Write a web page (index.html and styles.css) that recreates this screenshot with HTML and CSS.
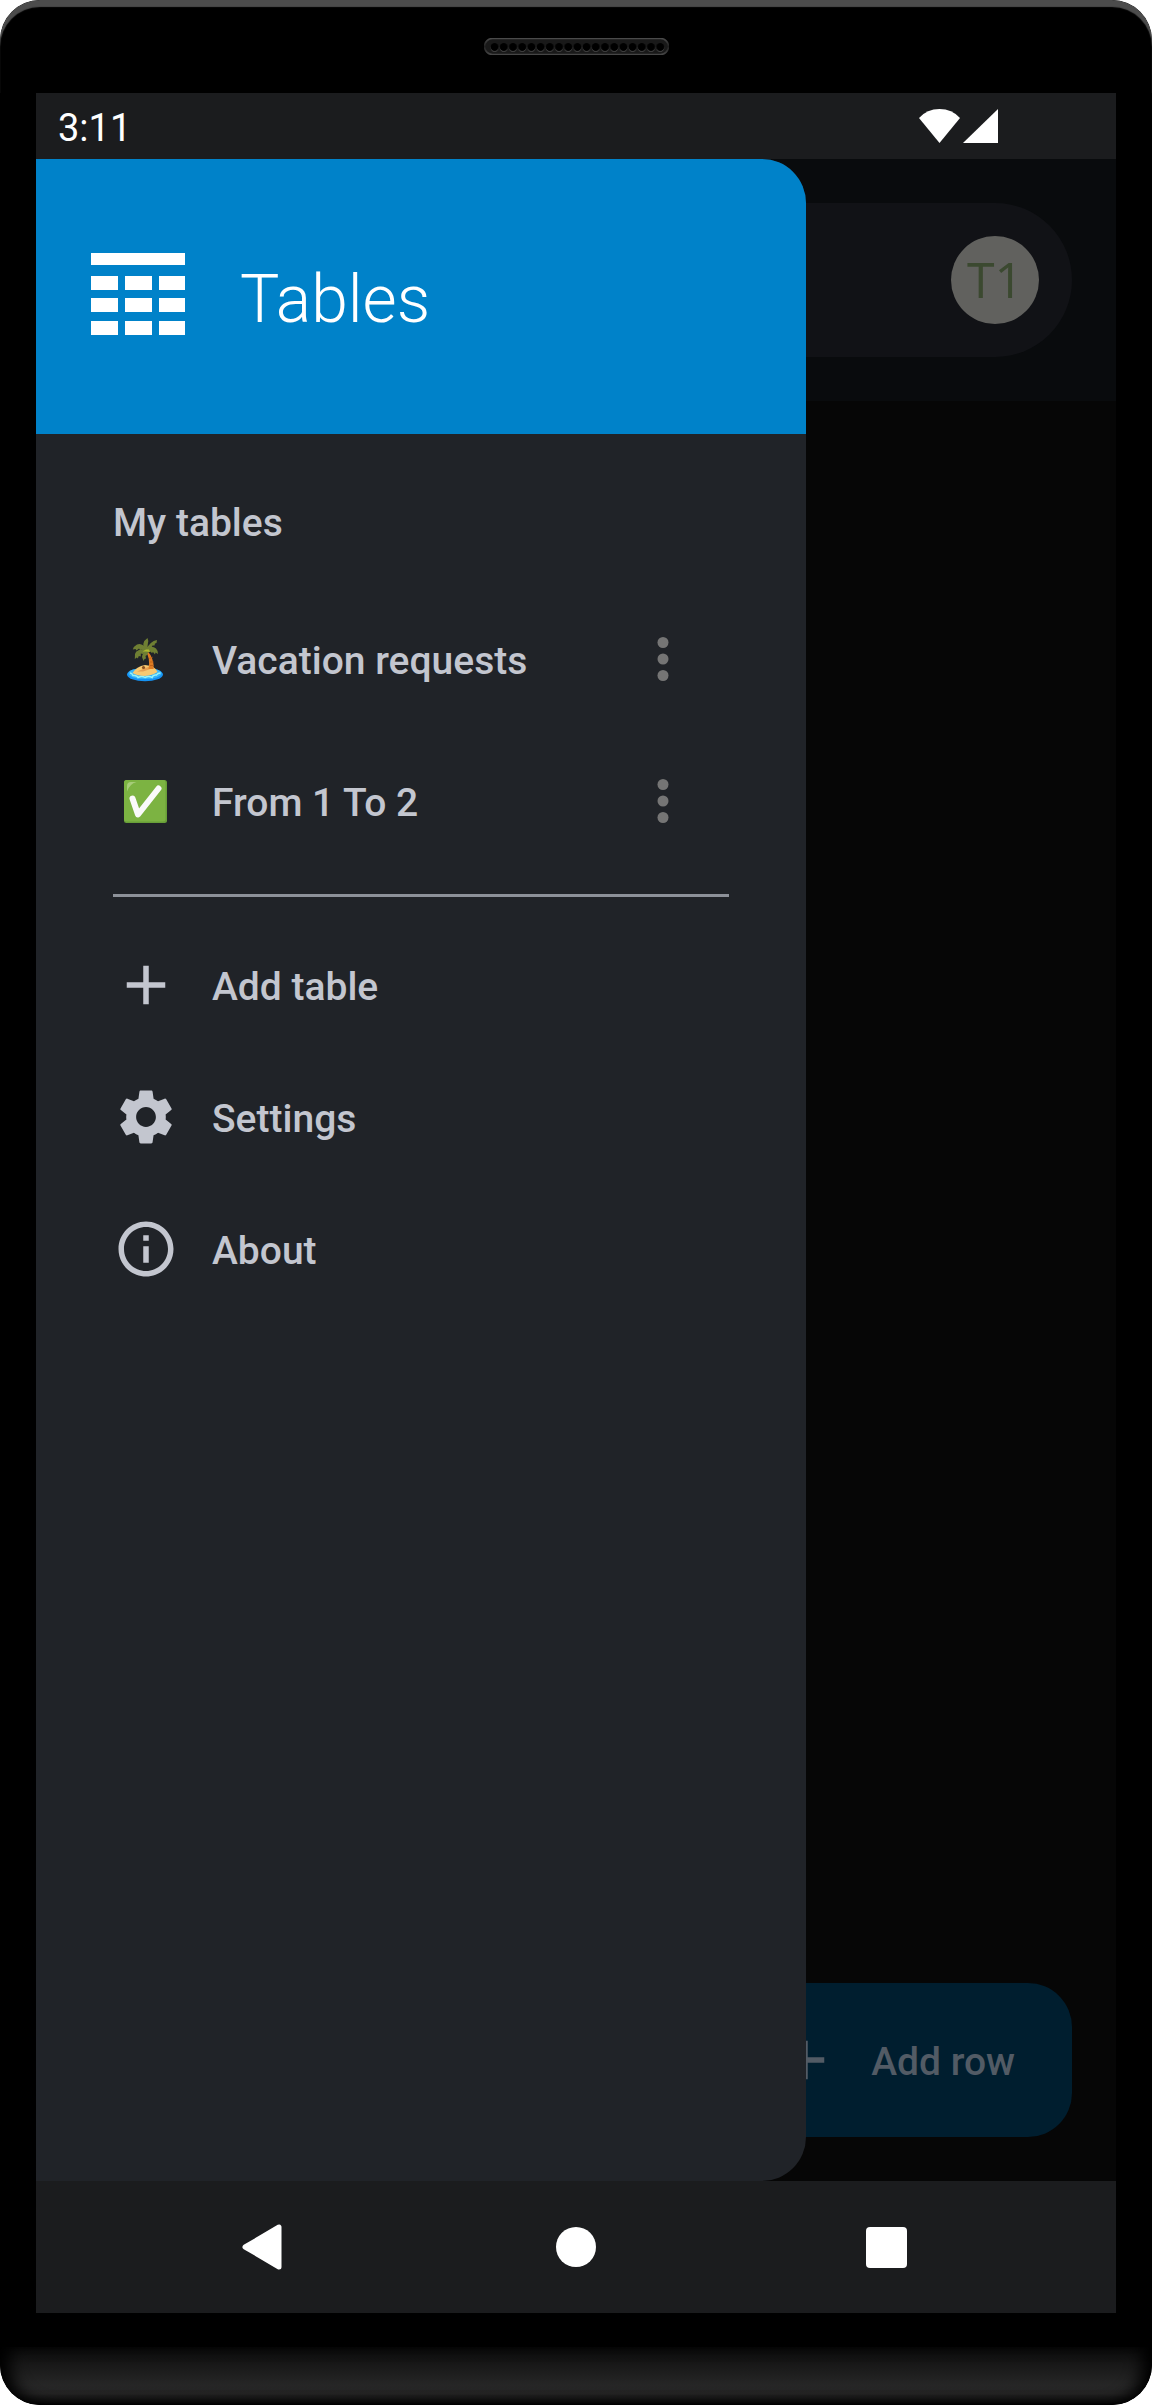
FILE: index.html
```html
<!DOCTYPE html>
<html lang="en">
<head>
<meta charset="utf-8">
<meta name="viewport" content="width=device-width, initial-scale=1">
<title>Tables</title>
<link rel="stylesheet" href="styles.css">
</head>
<body>
<div class="phone">
  <div class="earpiece">
    <svg class="speaker" viewBox="0 0 185 17" aria-hidden="true">
      <defs>
        <linearGradient id="rim" x1="0" y1="0" x2="0" y2="1">
          <stop offset="0" stop-color="#4a4a4a"/>
          <stop offset="0.5" stop-color="#202020"/>
          <stop offset="1" stop-color="#464646"/>
        </linearGradient>
        <pattern id="holes" x="6" y="0" width="9.2" height="17" patternUnits="userSpaceOnUse">
          <circle cx="4.6" cy="9.8" r="4" fill="#484848"/>
          <circle cx="4.6" cy="9" r="4" fill="#000"/>
        </pattern>
      </defs>
      <rect x="0.5" y="0.5" width="184" height="16" rx="8" fill="#191919" stroke="url(#rim)" stroke-width="1.6"/>
      <rect x="6" y="0" width="174.8" height="17" fill="url(#holes)"/>
    </svg>
  </div>

  <div class="screen">
    <div class="status">
      <span class="clock">3:11</span>
      <div class="signals">
        <svg class="wifi" viewBox="0 0 41 34" aria-hidden="true"><path d="M0 9Q8 0 20.500 0T41 9L20.500 34Z"/></svg>
        <svg class="cell" viewBox="0 0 35 34" aria-hidden="true"><path d="M35 0V34H0Z"/></svg>
      </div>
    </div>

    <div class="app">
      <main class="page">
        <header class="appbar">
          <div class="search">
            <button class="avatar" type="button" aria-label="Account">T1</button>
          </div>
        </header>
        <button class="fab" type="button">
          <svg class="icon" viewBox="0 0 24 24" aria-hidden="true"><path d="M19 13h-6v6h-2v-6H5v-2h6V5h2v6h6v2z"/></svg>
          <span class="label">Add row</span>
        </button>
      </main>

      <aside class="drawer">
        <header class="brand">
          <svg class="logo" viewBox="0 0 94 82" aria-hidden="true">
            <path d="M0 0h94v12H0zM0 23h27v14H0zM34 23h27v14H34zM68 23h26v14H68zM0 45h27v14H0zM34 45h27v14H34zM68 45h26v14H68zM0 68h27v14H0zM34 68h27v14H34zM68 68h26v14H68z"/>
          </svg>
          <h1 class="title">Tables</h1>
        </header>
        <nav class="menu">
          <h2 class="heading">My tables</h2>
          <ul class="list">
            <li class="row row-table">
              <a class="entry" href="#vacation">
                <svg class="icon" viewBox="0 0 66 66" aria-hidden="true">
                  <ellipse cx="32" cy="48.500" rx="18" ry="6.800" fill="#1592f3"/>
                  <ellipse cx="32" cy="47.500" rx="16.500" ry="5.500" fill="#35b4fa"/>
                  <path d="M17 47q2 0 3 2.500 4-.5 5 2 4-2 7 0 4-2 7 0 1-3 4.500-2.500 1-2 4-2" fill="none" stroke="#9af4f8" stroke-width="1.500"/>
                  <path d="M19.500 47q4-6.500 12.500-8Q42 39.500 44.500 46q-5 3.500-12.500 4Q24 50 19.500 47z" fill="#f8c971"/>
                  <path d="M24 45.500l11-4.500 4 1.500-9 3z" fill="#e8a051"/>
                  <path d="M33 26q4.500 6 2.500 17h5.200Q41 32 34.500 25z" fill="#de7c23"/>
                  <path d="M36.500 32.500l3-1.300M37 36h3.500M37 39.500h3.500" stroke="#bf6219" fill="none"/>
                  <circle cx="30.500" cy="41.500" r="1.600" fill="#8a4f20"/>
                  <g fill="#6f7f33">
                    <path d="M33 25Q27 17 34.500 12q1.500 3 .3 6Q34 21 35 25z"/>
                    <path d="M32 25Q37 15 44 14l-.5 3-1.500.5-.5 2-2 0-1 2-2 0L34 27z"/>
                    <path d="M32 23Q39 19 43 22.500q2 2 2 5.500l-2.500-1.500-.5 2-2-2.500-1 1-2-1.500L32 27z"/>
                    <path d="M35 24Q29 16 24 18.500q-3 1.500-4.200 5l2.700-.5 1 1.500 2.500-2 1 1.500 2-.5L33 27z"/>
                    <path d="M34 23Q23 23 22 28l-.2 5 2-1.500 1 1 1-2.500 2 .5 0-3 2.200.5L35 26z"/>
                    <path d="M35 24Q29 27 29 31l1.500 4 1-2 1.500-.5-.5-2.500 1.500-1L36 25z"/>
                  </g>
                  <path d="M29.500 25.500l3.500-2 3 0 1 2.500-4-.5z" fill="#aebb2f"/>
                </svg>
                <span class="label">Vacation requests</span>
              </a>
              <button class="more" type="button" aria-label="More options for Vacation requests">
                <svg class="icon" viewBox="0 0 24 24" aria-hidden="true"><circle cx="12" cy="6" r="2"/><circle cx="12" cy="12" r="2"/><circle cx="12" cy="18" r="2"/></svg>
              </button>
            </li>
            <li class="row row-table">
              <a class="entry" href="#from-1-to-2">
                <svg class="icon" viewBox="0 0 66 66" aria-hidden="true">
                  <rect x="11" y="12" width="43" height="43" rx="2.500" fill="#689f38"/>
                  <rect x="11" y="12" width="41.500" height="41.500" rx="2.500" fill="#7cb342"/>
                  <path d="M14 23.500V18q0-4 4-4h5.500q-7 2-9.500 9.500z" fill="#a6cc79"/>
                  <path d="M19.500 30.500L25 46.500 45.500 20.500" fill="none" stroke="#fafafa" stroke-width="6" stroke-linecap="round" stroke-linejoin="round"/>
                </svg>
                <span class="label">From 1 To 2</span>
              </a>
              <button class="more" type="button" aria-label="More options for From 1 To 2">
                <svg class="icon" viewBox="0 0 24 24" aria-hidden="true"><circle cx="12" cy="6" r="2"/><circle cx="12" cy="12" r="2"/><circle cx="12" cy="18" r="2"/></svg>
              </button>
            </li>
          </ul>
          <hr class="divider">
          <ul class="list">
            <li class="row">
              <a class="entry" href="#add">
                <svg class="icon" viewBox="0 0 24 24" aria-hidden="true"><path d="M19 13h-6v6h-2v-6H5v-2h6V5h2v6h6v2z"/></svg>
                <span class="label">Add table</span>
              </a>
            </li>
            <li class="row">
              <a class="entry" href="#settings">
                <svg class="icon" viewBox="0 0 24 24" aria-hidden="true"><path d="M19.140 12.940c.04-.3.06-.61.06-.94 0-.32-.02-.64-.07-.94l2.030-1.580c.18-.14.23-.41.12-.61l-1.920-3.320c-.12-.22-.37-.29-.59-.22l-2.390.96c-.5-.38-1.030-.7-1.620-.94L14.400 2.810c-.04-.24-.24-.41-.48-.41h-3.840c-.24 0-.43.17-.47.41L9.250 5.350C8.660 5.590 8.120 5.920 7.630 6.290L5.240 5.330c-.22-.08-.47 0-.59.22L2.740 8.870C2.620 9.080 2.660 9.340 2.860 9.480l2.030 1.580C4.840 11.360 4.800 11.690 4.800 12s.02.64.07.94l-2.030 1.580c-.18.14-.23.41-.12.61l1.920 3.320c.12.22.37.29.59.22l2.390-.96c.5.38 1.030.7 1.620.94l.36 2.540c.05.24.24.41.48.41h3.840c.24 0 .44-.17.47-.41l.36-2.540c.59-.24 1.130-.56 1.620-.94l2.390.96c.22.08.47 0 .59-.22l1.920-3.320c.12-.22.07-.47-.12-.61L19.140 12.940zM12 15.600c-1.980 0-3.600-1.620-3.600-3.600s1.620-3.600 3.600-3.600 3.600 1.620 3.600 3.600S13.980 15.600 12 15.600z"/></svg>
                <span class="label">Settings</span>
              </a>
            </li>
            <li class="row">
              <a class="entry" href="#about">
                <svg class="icon" viewBox="0 0 24 24" aria-hidden="true"><path d="M11 7h2v2h-2zM11 11h2v6h-2zM12 2C6.480 2 2 6.480 2 12s4.480 10 10 10 10-4.480 10-10S17.520 2 12 2zm0 18c-4.410 0-8-3.590-8-8s3.590-8 8-8 8 3.590 8 8-3.590 8-8 8z"/></svg>
                <span class="label">About</span>
              </a>
            </li>
          </ul>
        </nav>
      </aside>
    </div>

    <div class="navbar">
      <button class="key" type="button" aria-label="Back">
        <svg class="icon" viewBox="0 0 66 66" aria-hidden="true"><path d="M13 33L47 13V53Z" stroke="#fff" stroke-width="5" stroke-linejoin="round"/></svg>
      </button>
      <button class="key" type="button" aria-label="Home">
        <svg class="icon" viewBox="0 0 66 66" aria-hidden="true"><circle cx="33" cy="33" r="20"/></svg>
      </button>
      <button class="key" type="button" aria-label="Overview">
        <svg class="icon" viewBox="0 0 66 66" aria-hidden="true"><rect x="12" y="13" width="41" height="41" rx="4"/></svg>
      </button>
    </div>
  </div>

  <div class="chin"></div>
</div>
</body>
</html>
```
FILE: styles.css
```css
* {
  box-sizing: border-box;
}

body {
  margin: 0;
  background: #fff;
  font-family: Roboto, "Liberation Sans", sans-serif;
  font-size: 39px;
  line-height: 46px;
}

button {
  padding: 0;
  border: 0;
  background: none;
  color: inherit;
  font: inherit;
}

a {
  color: inherit;
  text-decoration: none;
}

.icon {
  display: block;
  flex: none;
  width: 66px;
  height: 66px;
  fill: currentColor;
}

.label {
  padding-top: 4px;
}

/* Device body */
.phone {
  display: flex;
  flex-direction: column;
  min-height: 100vh;
  overflow: hidden;
  border-radius: 40px;
  background: #000;
}

.earpiece {
  display: flex;
  justify-content: center;
  height: 93px;
  padding-top: 38px;
  border-radius: 40px 40px 0 0;
  box-shadow: inset 0 7px 1px #4c4c4c;
}

.speaker {
  width: 185px;
  height: 17px;
}

.screen {
  display: flex;
  flex: 1;
  flex-direction: column;
  margin: 0 36px;
}

.chin {
  height: 58px;
  margin-top: 34px;
  border-radius: 0 0 40px 40px;
  background: linear-gradient(#0c0c0c, #1a1a1a 35%, #262626 65%, #242424 80%, #101010 95%, #000);
  box-shadow: inset 14px 0 16px -4px #000, inset -14px 0 16px -4px #000;
}

/* Status bar */
.status {
  display: flex;
  align-items: center;
  justify-content: space-between;
  height: 66px;
  padding: 0 118px 0 22px;
  background: #1b1c1e;
  color: #fff;
}

.clock {
  padding-top: 4px;
  font-size: 38px;
}

.signals {
  display: flex;
  gap: 3px;
  fill: #fff;
}

.wifi,
.cell {
  width: 41px;
  height: 34px;
}

.cell {
  width: 35px;
}

/* Page behind the drawer, dimmed */
.app {
  position: relative;
  display: flex;
  flex: 1;
}

.page {
  display: flex;
  flex: 1;
  flex-direction: column;
  align-items: flex-end;
  justify-content: space-between;
  background: #060606;
}

.appbar {
  width: 100%;
  padding: 44px;
  background: #090b0d;
}

.search {
  display: flex;
  align-items: center;
  justify-content: flex-end;
  height: 154px;
  padding: 0 33px;
  border-radius: 77px;
  background: #111216;
}

.avatar {
  width: 88px;
  height: 88px;
  padding-bottom: 2px;
  border-radius: 50%;
  background: #61615e;
  color: #3b4930;
  font-family: "Open Sans", sans-serif;
  font-size: 50px;
}

.fab {
  display: flex;
  align-items: center;
  gap: 33px;
  height: 154px;
  margin: 44px;
  padding: 0 57px 0 44px;
  border-radius: 44px;
  background: #001e2f;
  color: #525b65;
  font-weight: 500;
}

/* Navigation drawer */
.drawer {
  position: absolute;
  top: 0;
  bottom: 0;
  left: 0;
  width: 770px;
  max-width: 100%;
  overflow: hidden;
  border-radius: 0 44px 44px 0;
  background: #202328;
  color: #c3c6cf;
}

.brand {
  display: flex;
  align-items: center;
  gap: 55px;
  height: 275px;
  padding: 0 55px 5px;
  background: #0082c9;
  color: #fff;
}

.logo {
  width: 94px;
  height: 82px;
  fill: currentColor;
}

.title {
  margin: 0;
  padding-top: 12px;
  font-size: 66px;
  font-weight: 300;
  line-height: 78px;
}

.menu {
  padding: 24px 77px;
  font-weight: 500;
}

.heading {
  margin: 0;
  font-size: 39px;
  font-weight: 500;
  line-height: 130px;
}

.list {
  margin: 0;
  padding: 0;
  list-style: none;
}

.row {
  display: flex;
  align-items: center;
  height: 132px;
}

.row-table {
  height: 142px;
  padding-right: 33px;
}

.entry {
  display: flex;
  flex: 1;
  align-items: center;
  gap: 33px;
}

.more {
  color: #757575;
}

.divider {
  height: 3px;
  margin: 22px 0;
  border: 0;
  background: #8d9199;
}

/* System navigation */
.navbar {
  display: flex;
  align-items: center;
  justify-content: center;
  gap: 245px;
  height: 132px;
  background: #1b1c1e;
  color: #fff;
}
```
